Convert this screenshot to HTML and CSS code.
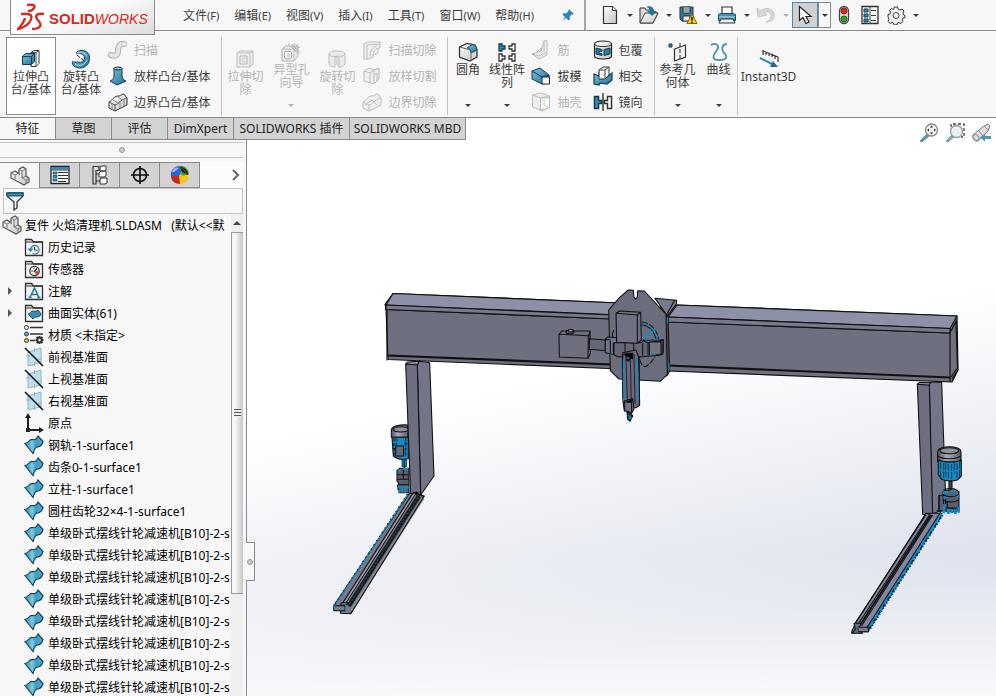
FILE: index.html
```html
<!DOCTYPE html>
<html lang="zh-CN">
<head>
<meta charset="utf-8">
<title>SOLIDWORKS</title>
<link rel="stylesheet" href="styles.css">
</head>
<body>
<svg class="defs" aria-hidden="true">
  <defs>
    <linearGradient id="blue" x1="0" y1="0" x2="1" y2="1"><stop offset="0" stop-color="#7cc4df"/><stop offset="1" stop-color="#1d6f93"/></linearGradient>
    <linearGradient id="steel" x1="0" y1="0" x2="1" y2="1"><stop offset="0" stop-color="#fff"/><stop offset="1" stop-color="#c4c4c4"/></linearGradient>
    <linearGradient id="surf" x1="0" y1="0" x2="1" y2="0"><stop offset="0" stop-color="#2f8cb0"/><stop offset=".4" stop-color="#7cc8e2"/><stop offset=".6" stop-color="#3f9dc0"/><stop offset="1" stop-color="#4fa9ca"/></linearGradient>
    <linearGradient id="cap" x1="0" y1="0" x2="1" y2="0"><stop offset="0" stop-color="#50515d"/><stop offset=".4" stop-color="#aaacb8"/><stop offset="1" stop-color="#5b5c68"/></linearGradient>

    <symbol id="i-extrude" viewBox="0 0 20 20"><path d="M10 3.500l3-2h5v13l-3 3h-5z" fill="#fff" stroke="#333"/><path d="M10 3.500h5v14M15 3.500l3-2" fill="none" stroke="#444"/><path d="M1.500 7.500l3-3h9v8l-3 3h-9z" fill="url(#blue)" stroke="#123b4e"/><path d="M1.500 7.500h9v8M10.500 7.500l3-3" fill="none" stroke="#123b4e"/></symbol>
    <symbol id="i-revolve" viewBox="0 0 20 20"><path d="M5 4C7 0 18 0 18.500 8c.5 7-4 11-9.500 11-5 0-8.500-3-7.500-6.500 2 1 3 .5 5 .5 4 1 7-1 7-4 0-3-3-5-8.500-5z" fill="url(#blue)" stroke="#164a60"/><path d="M4 15c4 3 10 1 12-4M6 3.500c4-1 8 0 9.500 4" fill="none" stroke="#b9e2f1"/><path d="M6 6l8 7" stroke="#222" stroke-dasharray="4 1"/></symbol>
    <symbol id="i-sweep" viewBox="0 0 20 20"><path d="M3 15c4 2 7 0 7-4 0-5 2-8 6-7" fill="none" stroke="#999" stroke-width="6" stroke-linecap="round"/><path d="M3 15c4 2 7 0 7-4 0-5 2-8 6-7" fill="none" stroke="#e0e0e0" stroke-width="4" stroke-linecap="round"/><ellipse cx="16" cy="4" rx="2.500" ry="2" fill="#f8f8f8" stroke="#b5b5b5"/></symbol>
    <symbol id="i-loft" viewBox="0 0 20 20"><path d="M6 2v7c0 4-2 5-4 6l7 4 9-4c-3-1-4-3-4-6V2z" fill="url(#blue)" stroke="#16384a"/><ellipse cx="10" cy="2.500" rx="4" ry="1.500" fill="#8bcbe2" stroke="#16384a"/></symbol>
    <symbol id="i-boundary" viewBox="0 0 20 20"><path d="M1 10c3-1 4-5 8-6 3 1 4-2 7-2l3 4v7l-12 6-6-3z" fill="url(#steel)" stroke="#333"/><path d="M1 10l6 3c4-1 5-4 7-5 2 0 3-2 5-2M7 13v6" fill="none" stroke="#555"/><path d="M4 11v7M12 9v7M16 7v7M5 8l5 3M9 4l5 4" fill="none" stroke="#8a8a8a"/></symbol>
    <symbol id="i-cut" viewBox="0 0 20 20"><path d="M2 4l3-2h13v13l-3 3H2z" fill="#ededed" stroke="#aaa"/><path d="M2 4h13v14M15 4l3-2" fill="none" stroke="#aaa"/><path d="M5 7h7v8H5z" fill="#fafafa" stroke="#999"/><path d="M7 9h5v4H7z" fill="#ddd" stroke="#bbb"/></symbol>
    <symbol id="i-hole" viewBox="0 0 20 20"><path d="M1 7l4-3h12v10l-4 5H1z" fill="#ececec" stroke="#999"/><path d="M1 7h12v12M13 7l4-3" fill="none" stroke="#aaa"/><circle cx="7" cy="13" r="4" fill="#fff" stroke="#888"/><circle cx="7.500" cy="13.500" r="2" fill="#ccc"/><path d="M10 3l8 8" stroke="#999" stroke-width="3"/><path d="M10 3l8 8" stroke="#ddd"/><path d="M14 1l-1 2M17 2l-2 2M19 5l-2 1M8 1v2" stroke="#999"/></symbol>
    <symbol id="i-revcut" viewBox="0 0 20 20"><path d="M2 5c0-4 16-4 16 0v10c-2 3-5 3-6 2V9l-2-2-2 2v9c-3 0-6-1-6-3z" fill="#e9e9e9" stroke="#aaa"/><path d="M2 5c1 3 6 3 8 2 4 1 7 0 8-2M10 7v9l3 3" fill="none" stroke="#aaa"/></symbol>
    <symbol id="i-sweepcut" viewBox="0 0 20 20"><path d="M2 4l4-2h12v6c-5 0-7 4-7 9l-4 2H2z" fill="#eee" stroke="#aaa"/><path d="M5 5l13-1M5 5v14M8 17c0-6 2-9 7-11M11 15l5-2V9" fill="none" stroke="#aaa"/></symbol>
    <symbol id="i-loftcut" viewBox="0 0 20 20"><path d="M2 5l5-3 5 2 5-2v11l-5 5-10-3z" fill="#eee" stroke="#aaa"/><path d="M2 5l6 2v10M8 7l4-3v14M12 4l5-1M12 9l3-2v8" fill="none" stroke="#aaa"/></symbol>
    <symbol id="i-boundcut" viewBox="0 0 20 20"><path d="M1 10c3-1 4-5 8-6 3 1 4-2 7-2l3 4v7l-12 6-6-3z" fill="#eee" stroke="#aaa"/><path d="M1 10l6 3c4-1 5-4 7-5 2 0 3-2 5-2M7 13v6M3 13l7-5 5 5" fill="none" stroke="#b0b0b0"/></symbol>
    <symbol id="i-fillet" viewBox="0 0 20 20"><path d="M1.500 5L9 1.500 17 3l2 5v7l-7 4-10.500-4z" fill="url(#steel)" stroke="#2b2b2b" stroke-width="1.200"/><path d="M9 6l5-3.500c3 0 5 2 5 5.500l-6 3c0-3-1-5-4-5z" fill="url(#blue)" stroke="#164a60"/><path d="M1.500 5L9 7c3 0 4 2 4 4v8" fill="none" stroke="#666"/></symbol>
    <symbol id="i-pattern" viewBox="0 0 20 20"><g fill="#fff" stroke="#333" stroke-width="1.300"><path d="M2 2h3v2h3v3H5v2H2z" fill="#2f8fb5" stroke="#123b4e"/><path d="M18 2h-3v2h-3v3h3v2h3zM2 12h3v2h3v3H5v2H2zM18 12h-3v2h-3v3h3v2h3z"/></g></symbol>
    <symbol id="i-rib" viewBox="0 0 20 20"><path d="M1 14l9-3 3-10 3-.5V15l-8 4z" fill="#e8e8e8" stroke="#aaa"/><path d="M1 14l7 2 8-4M13 1v10M10 11V8L5 13" fill="none" stroke="#aaa"/></symbol>
    <symbol id="i-draft" viewBox="0 0 20 20"><path d="M1 5l8-3 9 7v8l-7 1L1 13z" fill="url(#blue)" stroke="#16384a"/><path d="M1 5l10 6 7-2" fill="none" stroke="#16384a"/><path d="M11 11h7.500v7H11z" fill="#fff" stroke="#222"/></symbol>
    <symbol id="i-shell" viewBox="0 0 20 20"><path d="M1.500 3l8-2 9 3v11l-7 4-10-4z" fill="#ececec" stroke="#aaa"/><path d="M1.500 3l8 3v13M9.500 6l9-2" fill="none" stroke="#aaa"/><path d="M9.500 6h9v10l-9 2z" fill="#fafafa" stroke="#aaa"/><path d="M13 8v5l5 3" fill="none" stroke="#bbb"/></symbol>
    <symbol id="i-wrap" viewBox="0 0 20 20"><path d="M1.500 4c0-4 17-4 17 0v12c0 4-17 4-17 0z" fill="url(#steel)" stroke="#222" stroke-width="1.200"/><path d="M1.500 4c0 3.500 17 3.500 17 0" fill="none" stroke="#333"/><path d="M3 8l6 1.500v2H6v2h3v2L3 14zM17 8l-6 1.500v6L17 14z" fill="#267fa3" stroke="#123b4e"/></symbol>
    <symbol id="i-intersect" viewBox="0 0 20 20"><path d="M1 8l5 2V7l8 4 5-4v7l-5 4-7-1-1 2-5-1z" fill="url(#blue)" stroke="#143c50" stroke-width="1.200"/><path d="M6 4l4-3h6v8l-4 4H6z" fill="#f5f5f5" stroke="#333"/><path d="M6 4h6v9M12 4l4-3" fill="none" stroke="#444"/></symbol>
    <symbol id="i-mirror" viewBox="0 0 20 20"><path d="M1.500 4.500h4v4h3v3h-3v5h-4z" fill="#3691b5" stroke="#16384a" stroke-width="1.500"/><path d="M18.500 4.500h-4v4h-3v3h3v5h4z" fill="#fff" stroke="#333" stroke-width="1.500"/><path d="M10 1v18" stroke="#111" stroke-width="1.200"/></symbol>
    <symbol id="i-refgeo" viewBox="0 0 20 20"><path d="M1 2h3v3H1z" fill="#2f8fb5" stroke="#123b4e"/><path d="M6.500 7l11-4v12l-11 4z" fill="#f4f4f4" stroke="#333" stroke-width="1.200"/><path d="M12 1v18" stroke="#222" stroke-dasharray="4 2"/></symbol>
    <symbol id="i-curve" viewBox="0 0 20 20"><path d="M2 3c5-3 9 1 6 5-4 5-6 10 2 10s9-3 5-7c-3-4-2-9 3-9" fill="none" stroke="#4b91ac" stroke-width="1.800"/></symbol>
    <symbol id="i-instant" viewBox="0 0 20 20"><path d="M4 2l15 6M4 1v5M7 3v3M10 4v3M13 5v3M16 7v3M19 8v5" stroke="#333" stroke-width="1.200" fill="none"/><path d="M1 9l12 6" stroke="#2c88ad" stroke-width="2"/><path d="M11 18l8 0-5-6z" fill="#1f6d8e"/></symbol>

    <symbol id="i-pin" viewBox="0 0 14 14"><path d="M8 1l5 5-1.500.5h-1L8.500 9l.5 2.500-1.500 1L5 10l-4 3 3-4-2.500-2.500 1-1.500L5 5.500 7.500 3V2z" fill="#2c86b5"/></symbol>
    <symbol id="i-new" viewBox="0 0 20 20"><path d="M3.500 1.500h9l4 4v13h-13z" fill="url(#steel)" stroke="#333" stroke-width="1.200"/><path d="M12.500 1.500v4h4" fill="#fff" stroke="#333"/></symbol>
    <symbol id="i-open" viewBox="0 0 20 20"><path d="M1 18V3h5l1 2h7v3h5l-5 10z" fill="#ddd" stroke="#333"/><path d="M1 18L6 8h13l-5 10z" fill="url(#steel)" stroke="#444"/><path d="M7 2c5-2 8 1 8 4h3l-5 5-5-5h3c0-2-1-3-4-4z" fill="#1f7698"/></symbol>
    <symbol id="i-save" viewBox="0 0 20 20"><path d="M2 2h13v14H4l-2-2z" fill="#2d7fa2" stroke="#123b4e"/><path d="M5 2h7v6H5zM5 11h7v5H5z" fill="#eee" stroke="#333"/><path d="M5 4h7M5 6h7" stroke="#555"/><path d="M14 9l5 9.500H9z" fill="#ffd21f" stroke="#8a6200"/><path d="M14 12v3.500M14 16.500v1.500" stroke="#111" stroke-width="1.600"/></symbol>
    <symbol id="i-print" viewBox="0 0 20 20"><path d="M5 9V2h10v7" fill="#fff" stroke="#333" stroke-width="1.200"/><path d="M1.500 9.500l2-1h13l2 1v6h-17z" fill="#3b94b6" stroke="#164a60"/><path d="M2 12h16" stroke="#bfe4f2"/><path d="M4 14h12l2 4H2z" fill="#eee" stroke="#333"/></symbol>
    <symbol id="i-undo" viewBox="0 0 20 20"><path d="M1 3l1 9 9-2-3-2c3-2 7-1 7 3 0 3-2 5-5 6 6 0 9-3 8-8-1-6-9-7-14-3z" fill="#ccc" stroke="#b5b5b5"/></symbol>
    <symbol id="i-select" viewBox="0 0 20 20"><path d="M4.500 1.500v14l3.500-3 3 6 3-1.500-3-5.500h5z" fill="#fff" stroke="#222" stroke-width="1.200"/></symbol>
    <symbol id="i-light" viewBox="0 0 20 20"><rect x="5.500" y="1.500" width="9" height="17" rx="4.500" fill="#ddd" stroke="#444" stroke-width="1.300"/><circle cx="10" cy="6" r="3" fill="#e02b12" stroke="#7b1608"/><circle cx="10" cy="14" r="3" fill="#2fa52b" stroke="#175c14"/></symbol>
    <symbol id="i-options" viewBox="0 0 20 20"><path d="M2 1.500h16v17H2z" fill="#f6f6f6" stroke="#333" stroke-width="1.300"/><path d="M4 4h4v3H4zM4 9h4v3H4zM4 14h4v3H4z" fill="#2f8fb5" stroke="#123b4e"/><path d="M10 2v16M11 5.500h5M11 10.500h5M11 15.500h5" stroke="#444"/></symbol>
    <symbol id="i-gear" viewBox="0 0 20 20"><path d="M8.500 2h3l.5 2 2 1 2-1 2 2-1 2 .6 2 1.400.5v2l-2 .5-1 2 1 1.500-2 2-2-1-1.500.5-.5 2h-3l-.5-2-1.500-.5-2 1-2-2 1-2-.6-1.500L2 11.500v-2L4 9l.5-1.500-1-2 2-2 2 1z" fill="#eee" stroke="#333"/><circle cx="10" cy="10.500" r="3" fill="#f7f7f7" stroke="#444"/></symbol>

    <symbol id="i-assembly" viewBox="0 0 20 20"><path d="M9 3l4-2 3 2v7l3 2v4l-5 3-13-7V7l4-2 4 3z" fill="url(#steel)" stroke="#555" stroke-width="1.200"/><path d="M9 3l3 2v7l4 2v4M12 5l4-2M1 7l4 2v4M5 9l4-2M12 12l4-2M16 14l3-2" fill="none" stroke="#777"/></symbol>
    <symbol id="i-props" viewBox="0 0 20 20"><path d="M1 1.500h18v17H1z" fill="#fff" stroke="#222" stroke-width="1.300"/><path d="M1.500 2h17v2.500h-17z" fill="#2f8fb5"/><path d="M1.500 5h17M8 7.500h10M8 10.500h10M8 13.500h10M8 16.500h8" stroke="#333"/><path d="M3 7h4v2H3zM3 10.500h4v2H3zM3 14h4v2H3z" fill="#3d9dc2" stroke="#184a60" stroke-width=".8"/></symbol>
    <symbol id="i-config" viewBox="0 0 20 20"><path d="M3 1.500h6v4H6V19H3zM6 9h4M6 16h4" fill="#ddd" stroke="#333" stroke-width="1.200"/><path d="M10 2l2-1h4v4l-2 1h-4zM9 8l2-2h5v5l-2 1H9zM10 14l2-1h5v5l-2 1h-5z" fill="#fff" stroke="#333"/></symbol>
    <symbol id="i-target" viewBox="0 0 20 20"><circle cx="10" cy="10" r="6.500" fill="none" stroke="#111" stroke-width="1.700"/><path d="M10 1v18M1 10h18" stroke="#111" stroke-width="1.700"/></symbol>
    <symbol id="i-ball" viewBox="0 0 20 20"><circle cx="10" cy="10" r="9" fill="#f3c812"/><path d="M10 1C4 1 0 6 1 11l8 0c2-3 3-6 1-10z" fill="#2b62d6"/><path d="M1 11c0 5 4 8 9 8 0-3-1-5-1-8z" fill="#c9261c"/><path d="M9 1c6-1 10 4 10 8-3 1-4 0-5 2-2-1-3-2-4-2 1-3 1-5-1-8z" fill="#2fa648"/><path d="M10 2c5 0 8 4 8 8-3-1-7-3-8-8z" fill="#111"/><path d="M2 7c2-5 5-5 7-4-3 2-3 4-7 4z" fill="#8fc0ff"/><path d="M11 3c3 1 5 4 5 6" stroke="#c33" fill="none"/></symbol>
    <symbol id="i-filter" viewBox="0 0 20 20"><path d="M2 2h16v3l-6 6v6l-3 2v-8L2 5z" fill="#f5f5f5" stroke="#333" stroke-width="1.300"/><path d="M2 2h16v3H2z" fill="#2f8fb5" stroke="#164a60"/></symbol>

    <symbol id="i-folder" viewBox="0 0 20 20"><path d="M1.500 18.500v-16h6l2 2.500h9v13.500z" fill="#f2f2f2" stroke="#333" stroke-width="1.300"/><path d="M2 5h16.500" stroke="#333"/></symbol>
    <symbol id="i-history" viewBox="0 0 20 20"><use href="#i-folder"/><path d="M6.500 12a4.300 4.300 0 1 1 2 4.500" fill="none" stroke="#3b86a5" stroke-width="1.300"/><path d="M3.500 11.500l3 3.500 3-3.500z" fill="#2f7fa2"/><path d="M10.500 10v3h3" fill="none" stroke="#333"/></symbol>
    <symbol id="i-sensor" viewBox="0 0 20 20"><use href="#i-folder"/><circle cx="10.500" cy="12" r="4.700" fill="#fff" stroke="#333" stroke-width="1.300"/><path d="M10 13l3-3.500" stroke="#222" stroke-width="1.500"/><path d="M11.500 15l2.500-2.500" stroke="#d8451f" stroke-width="2.500"/><path d="M7 12h2M10 8.500v1.500" stroke="#555"/></symbol>
    <symbol id="i-note" viewBox="0 0 20 20"><use href="#i-folder"/><path d="M6 16.500L10.500 7l4.500 9.500M7.500 13.500h6M4.500 16.500h3M13 16.500h3.500" fill="none" stroke="#28799c" stroke-width="1.600"/></symbol>
    <symbol id="i-bodies" viewBox="0 0 20 20"><use href="#i-folder"/><path d="M4 11c2 0 3-2 4-3 2 0 4 1 6-1l3 4c-1 3-3 3-5 3-1 0-2 1-3 2z" fill="#3a8bb0" stroke="#164a60"/></symbol>
    <symbol id="i-material" viewBox="0 0 20 20"><circle cx="2.500" cy="2.500" r="2" fill="#fff" stroke="#333"/><circle cx="2.500" cy="9" r="2" fill="#5cb7d8" stroke="#333"/><circle cx="2.500" cy="15.500" r="2" fill="#f5c518" stroke="#333"/><path d="M6 2.500h13M6 9h13M6 15.500h5" stroke="#333" stroke-width="1.600"/><path d="M15.500 11v8M11.500 15h8M12.500 12l6 6M18.500 12l-6 6" stroke="#333" stroke-width="2"/><circle cx="15.500" cy="15" r="3" fill="#333"/><circle cx="15.500" cy="15" r="1.200" fill="#fff"/></symbol>
    <symbol id="i-plane" viewBox="0 0 20 20"><path d="M4 5l13-4v15L4 19z" fill="#bfdfea" stroke="#8db9c9"/><path d="M10.500 1v4M10.500 15v4M2 9h4M14 12h4" stroke="#9ab0b8"/><path d="M1 1l18 18" stroke="#111" stroke-width="1.600"/></symbol>
    <symbol id="i-origin" viewBox="0 0 20 20"><path d="M4 3v14h14" fill="none" stroke="#222" stroke-width="2"/><path d="M4 0l3 5H1zM20 17l-5-3v6z" fill="#222"/><path d="M2 15h4v4H2z" fill="#222"/></symbol>
    <symbol id="i-surface" viewBox="0 0 20 20"><path d="M1 8.500C4 8 5 6 7 4.500c3 0 5 1 7-3.500l5 5.500c-1 4-3 5-5 5.500-3-.5-4 3-5 6.500z" fill="url(#surf)" stroke="#16465c" stroke-width="1.200"/></symbol>

    <symbol id="i-zoomfit" viewBox="0 0 20 20"><path d="M1 18l7-7 2 2-7 6z" fill="#5d9dbb" stroke="#6b8a98"/><circle cx="12.500" cy="7" r="6" fill="#f4f4f4" stroke="#888" stroke-width="1.300"/><path d="M12.500 2.500l1.500 2h-3zM12.500 11.500l1.500-2h-3zM8 7l2-1.500v3zM17 7l-2-1.500v3z" fill="#222"/></symbol>
    <symbol id="i-zoomarea" viewBox="0 0 20 20"><path d="M6 4V1h13v13h-3" fill="none" stroke="#444" stroke-width="1.300" stroke-dasharray="3 2"/><path d="M1 18l7-7 2 2-7 6z" fill="#7db0c8" stroke="#7394a2"/><circle cx="11.500" cy="8.500" r="6" fill="#e9f0f3" stroke="#999" stroke-width="1.300"/></symbol>
    <symbol id="i-prevview" viewBox="0 0 20 20"><path d="M2 12l11-9 4-2 2 2-2 5L7 18c-3 1-6-3-5-6z" fill="url(#steel)" stroke="#777"/><ellipse cx="5" cy="14.500" rx="2.500" ry="3.500" transform="rotate(-40 5 14.500)" fill="#ddd" stroke="#888"/><path d="M8 8l4 5M13 3l4 4" stroke="#888"/><path d="M9 14.500l5-4v2.500h6v3h-6v2.500z" fill="#4a95b8"/></symbol>
  </defs>
</svg>

<header class="topbar">
  <div class="brand">
    <svg class="brand-mark" viewBox="0 0 28 28" aria-hidden="true"><g fill="none" stroke="#d5281e" stroke-width="2.400"><path d="M10 2c5-1 9 0 7 3-1 2-4 3-6 3"/><path d="M4 11h6c6 0 5 5 2 9-3 3-6 5-11 6 3-3 6-7 7-11"/><path d="M27 11c-7-1-9 1-7 5 4 4 5 7 1 9-2 1-4 1-6 1"/></g></svg>
    <span class="brand-text"><b>SOLID</b><i>WORKS</i></span>
  </div>
  <nav class="menu">
    <button>文件<small>(F)</small></button><button>编辑<small>(E)</small></button><button>视图<small>(V)</small></button><button>插入<small>(I)</small></button><button>工具<small>(T)</small></button><button>窗口<small>(W)</small></button><button>帮助<small>(H)</small></button>
  </nav>
  <button class="pin" aria-label="固定菜单"><svg><use href="#i-pin"/></svg></button>
  <div class="quick">
    <button class="tool" aria-label="新建"><svg><use href="#i-new"/></svg></button><button class="drop" aria-label="新建选项"></button>
    <button class="tool" aria-label="打开"><svg><use href="#i-open"/></svg></button><button class="drop" aria-label="打开选项"></button>
    <button class="tool" aria-label="保存"><svg><use href="#i-save"/></svg></button><button class="drop" aria-label="保存选项"></button>
    <button class="tool" aria-label="打印"><svg><use href="#i-print"/></svg></button><button class="drop" aria-label="打印选项"></button>
    <button class="tool" aria-label="撤消" disabled><svg><use href="#i-undo"/></svg></button><button class="drop" aria-label="撤消选项" disabled></button>
    <button class="tool active" aria-label="选择"><svg><use href="#i-select"/></svg></button><button class="drop boxed" aria-label="选择选项"></button>
    <button class="tool" aria-label="重建模型"><svg><use href="#i-light"/></svg></button>
    <button class="tool" aria-label="文件属性"><svg><use href="#i-options"/></svg></button>
    <button class="tool" aria-label="选项"><svg><use href="#i-gear"/></svg></button><button class="drop" aria-label="更多选项"></button>
  </div>
</header>

<section class="ribbon">
  <div class="group">
    <button class="big selected"><svg><use href="#i-extrude"/></svg><span>拉伸凸<br>台/基体</span></button>
    <button class="big"><svg><use href="#i-revolve"/></svg><span>旋转凸<br>台/基体</span></button>
    <div class="stack">
      <button disabled><svg><use href="#i-sweep"/></svg>扫描</button>
      <button><svg><use href="#i-loft"/></svg>放样凸台/基体</button>
      <button><svg><use href="#i-boundary"/></svg>边界凸台/基体</button>
    </div>
  </div>
  <div class="group">
    <button class="big mid" disabled><svg><use href="#i-cut"/></svg><span>拉伸切<br>除</span></button>
    <button class="big mid menu-btn" disabled><svg><use href="#i-hole"/></svg><span>异型孔<br>向导</span></button>
    <button class="big mid" disabled><svg><use href="#i-revcut"/></svg><span>旋转切<br>除</span></button>
    <div class="stack">
      <button disabled><svg><use href="#i-sweepcut"/></svg>扫描切除</button>
      <button disabled><svg><use href="#i-loftcut"/></svg>放样切割</button>
      <button disabled><svg><use href="#i-boundcut"/></svg>边界切除</button>
    </div>
  </div>
  <div class="group">
    <button class="big narrow menu-btn"><svg><use href="#i-fillet"/></svg><span>圆角</span></button>
    <button class="big narrow menu-btn"><svg><use href="#i-pattern"/></svg><span>线性阵<br>列</span></button>
    <div class="stack">
      <button disabled><svg><use href="#i-rib"/></svg>筋</button>
      <button><svg><use href="#i-draft"/></svg>拔模</button>
      <button disabled><svg><use href="#i-shell"/></svg>抽壳</button>
    </div>
    <div class="stack">
      <button><svg><use href="#i-wrap"/></svg>包覆</button>
      <button><svg><use href="#i-intersect"/></svg>相交</button>
      <button><svg><use href="#i-mirror"/></svg>镜向</button>
    </div>
  </div>
  <div class="group">
    <button class="big mid menu-btn"><svg><use href="#i-refgeo"/></svg><span>参考几<br>何体</span></button>
    <button class="big slim menu-btn"><svg><use href="#i-curve"/></svg><span>曲线</span></button>
  </div>
  <div class="group last">
    <button class="big wide"><svg><use href="#i-instant"/></svg><span>Instant3D</span></button>
  </div>
</section>

<div class="tabs">
  <button class="current">特征</button><button>草图</button><button>评估</button><button class="t3">DimXpert</button><button class="t4">SOLIDWORKS 插件</button><button class="t4">SOLIDWORKS MBD</button>
</div>

<main class="workspace">
  <aside class="side">
    <div class="grab"><i></i></div>
    <div class="side-tabs">
      <button class="current" aria-label="设计树"><svg><use href="#i-assembly"/></svg></button>
      <button aria-label="属性"><svg><use href="#i-props"/></svg></button>
      <button aria-label="配置"><svg><use href="#i-config"/></svg></button>
      <button aria-label="尺寸专家"><svg><use href="#i-target"/></svg></button>
      <button aria-label="外观"><svg><use href="#i-ball"/></svg></button>
      <button class="more" aria-label="更多"><svg viewBox="0 0 10 12"><path d="M3 1l5 5-5 5" fill="none" stroke="#666" stroke-width="2"/></svg></button>
    </div>
    <label class="filter"><svg><use href="#i-filter"/></svg><input type="text" aria-label="过滤器"></label>
    <div class="tree-box">
      <ul class="tree">
        <li class="root"><svg><use href="#i-assembly"/></svg>复件 火焰清理机.SLDASM   (默认&lt;&lt;默</li>
        <li><svg><use href="#i-history"/></svg>历史记录</li>
        <li><svg><use href="#i-sensor"/></svg>传感器</li>
        <li class="closed"><svg><use href="#i-note"/></svg>注解</li>
        <li class="closed"><svg><use href="#i-bodies"/></svg>曲面实体(61)</li>
        <li><svg><use href="#i-material"/></svg>材质 &lt;未指定&gt;</li>
        <li><svg><use href="#i-plane"/></svg>前视基准面</li>
        <li><svg><use href="#i-plane"/></svg>上视基准面</li>
        <li><svg><use href="#i-plane"/></svg>右视基准面</li>
        <li><svg><use href="#i-origin"/></svg>原点</li>
        <li><svg><use href="#i-surface"/></svg>钢轨-1-surface1</li>
        <li><svg><use href="#i-surface"/></svg>齿条0-1-surface1</li>
        <li><svg><use href="#i-surface"/></svg>立柱-1-surface1</li>
        <li><svg><use href="#i-surface"/></svg>圆柱齿轮32×4-1-surface1</li>
        <li><svg><use href="#i-surface"/></svg>单级卧式摆线针轮减速机[B10]-2-s</li>
        <li><svg><use href="#i-surface"/></svg>单级卧式摆线针轮减速机[B10]-2-s</li>
        <li><svg><use href="#i-surface"/></svg>单级卧式摆线针轮减速机[B10]-2-s</li>
        <li><svg><use href="#i-surface"/></svg>单级卧式摆线针轮减速机[B10]-2-s</li>
        <li><svg><use href="#i-surface"/></svg>单级卧式摆线针轮减速机[B10]-2-s</li>
        <li><svg><use href="#i-surface"/></svg>单级卧式摆线针轮减速机[B10]-2-s</li>
        <li><svg><use href="#i-surface"/></svg>单级卧式摆线针轮减速机[B10]-2-s</li>
        <li><svg><use href="#i-surface"/></svg>单级卧式摆线针轮减速机[B10]-2-s</li>
      </ul>
      <div class="scroll"><button class="up" aria-label="向上滚动"></button><div class="thumb"><i></i></div></div>
    </div>
  </aside>

  <section class="viewport">
    <div class="hud">
      <button aria-label="整屏显示"><svg><use href="#i-zoomfit"/></svg></button>
      <button aria-label="局部放大"><svg><use href="#i-zoomarea"/></svg></button>
      <button aria-label="上一视图"><svg><use href="#i-prevview"/></svg></button>
    </div>
    <button class="collapse" aria-label="折叠面板"><i></i></button>
    <svg class="model" viewBox="247 140 749 556" preserveAspectRatio="xMinYMin meet" role="img" aria-label="火焰清理机">
      <g stroke="#111" stroke-width="1.200" stroke-linejoin="round">
        <!-- beam -->
        <path d="M393 293.500L620 303l48 5 9-3 280 11 1 54-6 12-284-11-48-2-232-9.500-2-52-1-3z" fill="#6e7080"/>
        <path d="M393 293.500L620 303v12l-234-10zM677 305l280 11-7 12.500-282-11.500z" fill="#8d90a6"/>
        <path d="M386 305v4.500l226 9.500M387 310.500v50M668 322l282 11M950 328v54M951 331l5-10 1.500 47-6.500 9M952 379l6-9" fill="none"/>
        <path d="M386 305l226 10v4l-226-9.500zM668 317l282 11.500v4.500L668 322z" fill="#77798c"/>
        <path d="M388 355.500l224 9M668 365.500l282 12" fill="none" stroke-width="2.200"/>
      </g>

      <g transform="translate(320 350) scale(.33333)" stroke="#111" stroke-width="3.200" stroke-linejoin="round">
        <!-- left leg and drive -->
        <path d="M263 225c-25-2-48 4-49 15v22h50z" fill="url(#cap)"/><ellipse cx="242" cy="238" rx="22" ry="8" fill="#8e90a0"/>
        <path d="M216 262h49v64c-18 5-35 0-45-8z" fill="#168ac2"/>
        <path d="M222 265v52M229 265v20M257 265v55M218 296h8M252 280h12" stroke-dasharray="9 5"/>
        <path d="M227 288h24v30h-24z" fill="#666879"/><path d="M246 330h14v20h-14z" fill="#168ac2" stroke-width="2"/><path d="M253 334v24"/>
        <path d="M231 362l8-7h28v73h-30l-5-20 5-8-6-8z" fill="#5c5e6b"/><path d="M234 362h10M250 357h15M238 392h4M232 412h34M237 420v8M247 412v16M257 412v16" stroke="#168ac2" stroke-width="6"/><path d="M230 374h36M232 388h34M234 404h32M250 360v28"/>
        <path d="M262 36l36-2-5 12-36-4z" fill="#878a9e"/>
        <path d="M298 34l31 4 13 340-40 57-10-390z" fill="#737588"/>
        <path d="M257 42l35 3 10 390-30-3z" fill="#6d6f80"/>
        <!-- left rail -->
        <path d="M268 430l44 9L92 791l-30-1v-9H42v-15z" fill="#777a8c"/>
        <path d="M285 432L78 756" stroke="#a4a6b5" stroke-width="7"/>
        <path d="M297 438L86 768" stroke="#161c20" stroke-width="13"/>
        <path d="M294 442L85 768" stroke="#54737c" stroke-width="2" stroke-dasharray="6 5"/>
        <path d="M310 444L94 783" stroke="#8e91a4" stroke-width="7"/>
        <path d="M278 430L66 762M312 439L92 791M288 430L76 762" fill="none"/>
        <path d="M264 432L45 765" stroke="#168ac2" stroke-width="4"/><path d="M262 432L45 762" stroke-dasharray="4 11"/>
        <path d="M42 767h33v15H42zM64 758h22l-10 8H62z" fill="#7a7d90"/><path d="M77 765v20M43 766v14" stroke="#168ac2"/>
        <path d="M278 428l14-2 6 10M300 433l13 6"/>
      </g>

      <g transform="translate(840 300) scale(.33333)" stroke="#111" stroke-width="3.200" stroke-linejoin="round">
        <!-- right leg -->
        <path d="M238 247l34 1-4 9-36-4z" fill="#878a9e"/>
        <path d="M272 247h33l13 380-42 15-8-388z" fill="#737588"/>
        <path d="M232 253l36 3 10 390-30-3z" fill="#6d6f80"/>
        <!-- right rail -->
        <path d="M258 640h48L84 995H54l-18 5-1-5 10-22z" fill="#8386a0"/>
        <path d="M258 644L45 970M268 645L55 972M274 651L65 977" fill="none"/><path d="M271 648L60 976" stroke-width="6"/>
        <path d="M305 642L84 988" stroke="#168ac2" stroke-width="11"/><path d="M302 636L80 984" fill="none"/><path d="M308 646L88 991" stroke-width="5" stroke-dasharray="3 7"/><path d="M303 650L84 990" stroke-dasharray="10 16"/>
        <path d="M42 970h20v6l-10 10 16 14H36l10-12z" fill="#656777"/><path d="M54 982h30l2 13H56z" fill="#7a7d90"/><path d="M54 980v14" stroke="#168ac2"/>
        <path d="M256 640l12 2 7 8 4-4M290 632l18 2"/>
        <!-- right drive -->
        <path d="M293 455c0-20 70-20 70 0v30h-70z" fill="url(#cap)"/><ellipse cx="328" cy="452" rx="28" ry="9" fill="#8e90a0"/><path d="M293 467c10 12 60 12 70 0" fill="none"/>
        <path d="M295 480c15 8 55 8 69 0v48l-12 12c-18 5-34 4-47-2l-10-14z" fill="#168ac2"/>
        <path d="M302 488v42M311 490v46M317 490v40M325 492v48M335 492v50M343 490v30M351 490v48M359 486v44" stroke-width="2" stroke-dasharray="20 4"/>
        <path d="M327 544h9v24h-9z" fill="#444653"/>
        <path d="M297 586h20v46h-20zM309 575c10-8 38-8 48 0v50l-8 10h-30l-8-10z" fill="#5d5f6c"/>
        <path d="M309 578h15M332 573h20M310 592h12M340 588h17M314 612l-3 28M325 628v14M336 624v16M346 622v20M356 620v18" stroke="#168ac2" stroke-width="8"/>
        <path d="M308 584c14 8 36 8 48 0M310 600c12 8 34 8 46 0M320 604l4 20h28M310 570l12-4h20l12 6M297 586v44M318 624l30 2" fill="none"/>
      </g>

      <g transform="translate(540 280) scale(.33333)" stroke="#111" stroke-width="3.200" stroke-linejoin="round">
        <!-- carriage -->
        <path d="M345 55l65 6-1 11-27 36z" fill="#777a8d"/><path d="M404 60l-24 44" fill="none"/>
        <path d="M376 108h8l5 166-9 14z" fill="#4d4f5c"/>
        <path d="M265 30l15 1 2 20 4 6 6-5 1-20 20 1 65 70 4 180-21 21-124-7-26-25-5-182 33-38z" fill="#6b6d7d"/>
        <path d="M383 112v18M387 250v22" stroke="#168ac2"/>
        <path d="M306 126c30 4 50 30 50 60-1 35-18 62-40 74-10-2-15-10-18-30" fill="none" stroke-dasharray="18 5"/>
        <path d="M306 134c22 4 38 20 43 48M222 150c-6 8-6 16-2 24" fill="none"/>
        <path d="M306 130c20 3 38 15 45 42M310 176l36-26M316 168l18-22" fill="none" stroke="#168ac2" stroke-width="4" stroke-dasharray="16 5"/>
        <!-- side motor and arm -->
        <path d="M57 163l8-10h85l1 68-7 14-86-4z" fill="#6e7080"/><path d="M57 163l88 4 6-12M145 167l-1 68" fill="none"/><ellipse cx="90" cy="156" rx="12" ry="5" fill="#77798a"/><ellipse cx="92" cy="152" rx="8" ry="4" fill="#88899c"/>
        <path d="M148 176l48 4v32l-48-4z" fill="#656778"/>
        <path d="M196 178l6-7 28 2 2 50h-10l-26-5z" fill="#727486"/><path d="M212 179h-15M211 179v42M220 188v34" fill="none"/><path d="M210 181h10M211 219h8" stroke="#168ac2"/>
        <path d="M222 188h82l8-8h58l-1 42-12 4-50 4h-74l-11-6z" fill="#666879"/>
        <path d="M255 190v35M281 190v35M308 190v37M312 184l12 4v38M324 188l38-6v42" fill="none"/>
        <path d="M328 186h35v38h-35z" fill="#717385"/><path d="M362 184l7-6v40" fill="none"/><path d="M313 178h20M340 178h18M330 224h18" stroke="#168ac2"/>
        <path d="M228 100l12-7 62 4 2 83-12 10-62-3z" fill="#6f7182"/><path d="M228 100l64 5 10-8M292 105v85" fill="none"/>
        <!-- torch -->
        <path d="M248 218l40-8 8 20 3 145-10 8h-12l-2 10h-22l-4-28z" fill="#686a7b"/>
        <path d="M258 235l4 125M271 235l3 130M282 222l3 150" fill="none" stroke-width="2.400"/>
        <path d="M250 238l2 124M291 230l4 134" stroke="#168ac2" stroke-width="5"/><path d="M247 222l1 135M298 235v140" fill="none" stroke-width="2.400"/>
        <circle cx="265" cy="232" r="7" fill="#5c5e6a"/><path d="M250 224l10-4h18v18M258 240l12 4"/>
        <path d="M254 362l24-6 4 30-6 12-22-6z" fill="#727487"/><path d="M256 366l18 1 4-10M275 367v28"/>
        <path d="M261 396l12 4 5 8-8 16-7-6z" fill="#25333b"/><path d="M265 406l9 8M265 416h9" stroke="#168ac2" stroke-width="4"/>
      </g>
    </svg>
  </section>
</main>
</body>
</html>
```
FILE: styles.css
```css
* { box-sizing: border-box; }

:root {
  --panel: #f7f7f7;
  --line: #8a8a8a;
  --soft: #c3c3c3;
  --tab: #d3d3d3;
  --ink: #3c3c3c;
}

body {
  margin: 0;
  height: 100vh;
  display: flex;
  flex-direction: column;
  overflow: hidden;
  background: #fff;
  color: var(--ink);
  font: 12px/13px "Noto Sans", "Noto Sans CJK SC", sans-serif;
}

button {
  margin: 0;
  padding: 0;
  border: 0;
  background: none;
  color: inherit;
  font: inherit;
}

.defs {
  position: absolute;
  width: 0;
  height: 0;
}

/* Title bar */
.topbar {
  flex: none;
  display: flex;
  height: 31px;
  background: var(--panel);
  border-bottom: 1px solid var(--line);
}

.brand {
  position: relative;
  z-index: 2;
  flex: none;
  display: flex;
  align-items: center;
  gap: 4px;
  width: 145px;
  height: 35px;
  margin-left: 10px;
  padding-left: 6px;
  background: linear-gradient(160deg, #fff 40%, #dcdcdc);
  border: 1px solid var(--line);
  border-top: 0;
}

.brand-mark {
  flex: none;
  width: 28px;
  height: 28px;
}

.brand-text {
  padding-top: 4px;
  color: #d5281e;
  font: 15px/20px "Liberation Sans", sans-serif;
}

.brand-text i { font-size: 14px; }

.menu {
  display: flex;
  align-items: center;
  gap: 15px;
  margin-left: 28px;
}

.menu button { white-space: nowrap; }
.menu small { font-size: 11px; }

.pin {
  width: 14px;
  margin: 0 9px 0 auto;
}

.pin svg {
  display: block;
  width: 14px;
  height: 14px;
}

.quick {
  flex: none;
  display: flex;
  align-items: center;
  width: 412px;
  padding-left: 11px;
  border-left: 2px solid #a6a6a6;
}

.tool {
  display: grid;
  place-items: center;
  width: 26px;
  height: 26px;
}

.tool svg {
  width: 20px;
  height: 20px;
}

.tool.active {
  background: #d0d0d0;
  border: 1px solid #4a86ad;
}

.drop {
  display: grid;
  place-items: center;
  width: 13px;
  height: 26px;
}

.drop.boxed { border: 1px solid var(--line); }

.drop::after,
.menu-btn::after {
  content: "";
  border: 3px solid transparent;
  border-top-color: currentColor;
  border-bottom: 0;
}

button:disabled { color: #b4b4b4; }
button:disabled svg { opacity: .75; }

/* Ribbon */
.ribbon {
  flex: none;
  display: flex;
  height: 87px;
  padding: 6px 6px 2px;
  background: var(--panel);
  border-bottom: 1px solid var(--line);
}

.group { display: flex; }

.group + .group {
  margin-left: 11px;
  border-left: 1px solid var(--soft);
}

.group + .last { margin-left: 0; }

.big {
  display: flex;
  flex-direction: column;
  align-items: center;
  gap: 1px;
  width: 50px;
  padding: 12px 0 8px;
  white-space: nowrap;
}

.big svg {
  flex: none;
  width: 20px;
  height: 20px;
}

.big.mid { width: 46px; }
.big.narrow { width: 39px; }
.big.slim { width: 36px; }
.big.wide { width: 62px; }

.big.selected {
  padding-top: 11px;
  background: #fff;
  border: 1px solid var(--line);
}

.big.menu-btn { padding-top: 5px; }
.menu-btn::after { margin-top: auto; }

.stack {
  display: grid;
  grid-template-rows: repeat(3, 26px);
  padding-left: 2px;
}

.narrow + .stack { padding-left: 5px; }
.stack + .stack { padding-left: 11px; }

.stack button {
  display: flex;
  align-items: center;
  gap: 6px;
  white-space: nowrap;
}

.stack svg {
  width: 20px;
  height: 20px;
}

/* Command tabs */
.tabs {
  flex: none;
  display: flex;
  height: 22px;
}

.tabs button {
  width: 56px;
  background: var(--tab);
  border: solid var(--line);
  border-width: 0 1px 1px 0;
  color: #222;
  white-space: nowrap;
}

.tabs .t3 { width: 66px; }
.tabs .t4 { width: 116px; }

.tabs .current,
.side-tabs .current {
  background: var(--panel);
}

/* Feature tree panel */
.workspace {
  flex: 1;
  display: flex;
  min-height: 0;
}

.side {
  flex: none;
  display: flex;
  flex-direction: column;
  width: 247px;
  padding-right: 3px;
  background: var(--panel);
  border-right: 1px solid var(--line);
}

.grab {
  flex: none;
  display: grid;
  place-items: center;
  height: 16px;
  margin-top: 2px;
  border: solid var(--soft);
  border-width: 1px 0;
}

.grab i,
.collapse i {
  width: 6px;
  height: 6px;
  border: 1px solid #999;
  border-radius: 50%;
  background: #ccc;
}

.side-tabs {
  flex: none;
  display: flex;
  height: 26px;
  margin-top: 4px;
  background: #fcfcfc;
}

.side-tabs button {
  display: grid;
  place-items: center;
  width: 40px;
  background: var(--tab);
  border: 1px solid var(--line);
  border-left: 0;
}

.side-tabs .current { border-bottom: 0; }

.side-tabs svg {
  width: 20px;
  height: 20px;
}

.side-tabs .more {
  width: 16px;
  margin-left: auto;
  background: none;
  border: 0;
}

.side-tabs .more svg {
  width: 10px;
  height: 12px;
}

.filter {
  flex: none;
  display: flex;
  align-items: center;
  height: 26px;
  margin-left: 3px;
  padding-left: 1px;
  border: 1px solid var(--soft);
}

.filter svg {
  width: 20px;
  height: 20px;
}

.filter input {
  flex: 1;
  min-width: 0;
  border: 0;
  background: none;
  font: inherit;
}

.tree-box {
  flex: 1;
  display: flex;
  min-height: 0;
}

.tree {
  flex: 1;
  min-width: 0;
  margin: 0;
  padding: 0;
  overflow: hidden;
  list-style: none;
  color: #000;
}

.tree li {
  display: flex;
  align-items: center;
  gap: 4px;
  height: 22px;
  padding-left: 24px;
  white-space: pre;
}

.tree .root {
  gap: 3px;
  padding-left: 2px;
}

.tree svg {
  flex: none;
  width: 20px;
  height: 20px;
}

.tree .closed {
  gap: 0;
  padding-left: 8px;
}

.tree .closed svg { margin: 0 4px 0 12px; }

.tree .closed::before {
  content: "";
  border: 4px solid transparent;
  border-left-color: #555;
  border-right: 0;
}

.scroll {
  flex: none;
  display: flex;
  flex-direction: column;
  width: 12px;
  background: #efefef;
}

.up {
  display: grid;
  place-items: center;
  height: 18px;
}

.up::after {
  content: "";
  border: 4px solid transparent;
  border-bottom-color: #444;
  border-top: 0;
}

.thumb {
  display: grid;
  place-items: center;
  height: 75%;
  background: linear-gradient(90deg, #f6f6f6 30%, #c6c6c6);
  border: 1px solid #999;
  border-right: 0;
}

.thumb i {
  width: 7px;
  height: 8px;
  background: repeating-linear-gradient(#555 0 1px, #eee 1px 3px);
}

/* Graphics area */
.viewport {
  position: relative;
  flex: 1;
  min-width: 0;
  background:
    linear-gradient(to top, #f8f9fb, rgba(248, 249, 251, 0) 26%),
    linear-gradient(168deg, #fff 42%, #dde1ec 82%);
}

.model {
  display: block;
  width: 100%;
  height: 100%;
}

.hud {
  position: absolute;
  top: -17px;
  right: 5px;
  display: flex;
  gap: 6px;
}

.hud svg {
  display: block;
  width: 20px;
  height: 20px;
}

.collapse {
  position: absolute;
  top: 402px;
  left: -1px;
  display: grid;
  place-items: center;
  width: 9px;
  height: 39px;
  background: var(--panel);
  border: 1px solid var(--line);
  border-left: 0;
}
```
